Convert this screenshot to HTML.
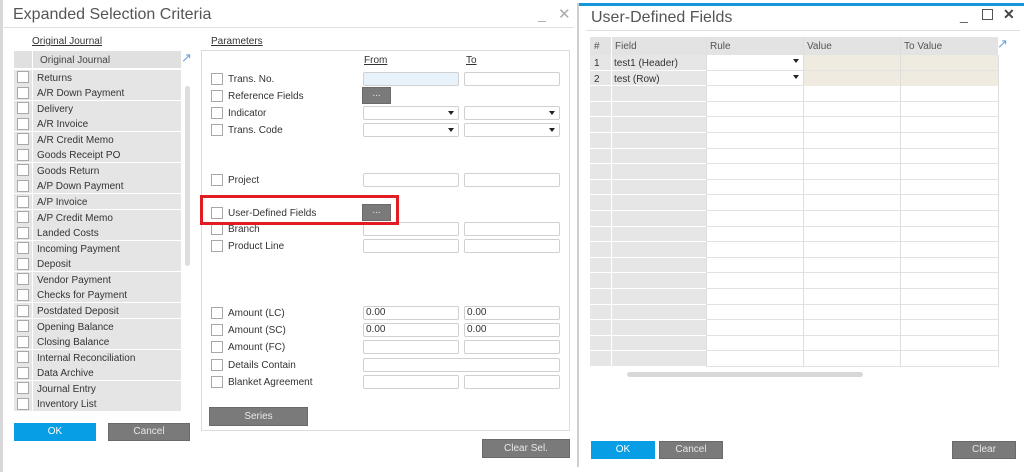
<!DOCTYPE html>
<html><head><meta charset="utf-8"><style>
*{margin:0;padding:0;box-sizing:border-box}
body{width:1024px;height:472px;background:#fff;position:relative;overflow:hidden;font-family:"Liberation Sans",sans-serif;font-size:10px;color:#333}
.a{position:absolute}
.cb{position:absolute;width:12px;height:12px;border:1px solid #a8a8a8;background:#fff}
.lbl{position:absolute;font-size:10px;color:#333;white-space:nowrap}
.in{position:absolute;height:14px;border:1px solid #d0d0d0;border-radius:2px;background:#fff;font-size:10px;padding-left:2px;line-height:12px}
.btn{position:absolute;background:#7a7a7a;color:#e8e8e8;font-size:10px;text-align:center;border:1px solid #6a6a6a}
.blue{background:#079ee6;color:#fff;border-color:#079ee6}
.u{text-decoration:underline}
.dd::after{content:"";position:absolute;right:4px;top:4px;border-left:3px solid transparent;border-right:3px solid transparent;border-top:4px solid #222}
.row{position:absolute;left:14px;width:167px;height:15px;background:#e5e5e5}
</style></head><body>
<div class="a" style="left:0;top:0;width:3px;height:472px;background:#d8d8d8"></div>
<div class="a" style="left:13px;top:6px;font-size:16px;color:#555">Expanded Selection Criteria</div>
<div class="a" style="left:538px;top:6px;font-size:14px;color:#aaa">_</div>
<div class="a" style="left:558px;top:5px;font-size:15px;color:#aaa">✕</div>
<div class="a" style="left:4px;top:27px;width:570px;height:1px;background:#e0e0e0"></div>
<div class="lbl u" style="left:32px;top:36px">Original Journal</div>
<div class="lbl u" style="left:211px;top:36px">Parameters</div>
<div class="a" style="left:14px;top:51px;width:167px;height:17px;background:#e0e0e0"></div>
<div class="a" style="left:32px;top:51px;width:1px;height:361px;background:#fff"></div>
<div class="lbl" style="left:40px;top:55px;color:#444">Original Journal</div>
<div class="a" style="left:181px;top:50px;font-size:13px;color:#6aa3d8">↗</div>
<div class="a" style="left:185px;top:86px;width:5px;height:180px;border-radius:3px;background:#ddd"></div>
<div id="list"></div>
<div class="a" style="left:201px;top:50px;width:369px;height:381px;border:1px solid #dcdcdc"></div>
<div class="lbl u" style="left:364px;top:55px">From</div>
<div class="lbl u" style="left:466px;top:55px">To</div>
<div id="params"></div>
<div class="a" style="left:200px;top:195px;width:199px;height:30px;border:3px solid #e31b23"></div>
<div class="btn" style="left:209px;top:407px;width:99px;height:19px;line-height:17px">Series</div>
<div class="btn blue" style="left:14px;top:423px;width:82px;height:18px;line-height:16px">OK</div>
<div class="btn" style="left:108px;top:423px;width:82px;height:18px;line-height:16px">Cancel</div>
<div class="btn" style="left:482px;top:439px;width:88px;height:19px;line-height:17px">Clear Sel.</div>
<div class="a" style="left:577px;top:3px;width:2px;height:464px;background:#cfcfcf"></div>
<div class="a" style="left:579px;top:3px;width:445px;height:3px;background:#1596dc"></div>
<div class="a" style="left:591px;top:9px;font-size:16px;color:#555">User-Defined Fields</div>
<div class="a" style="left:960px;top:7px;font-size:14px;color:#555">_</div>
<div class="a" style="left:982px;top:9px;width:11px;height:11px;border:1.5px solid #555"></div>
<div class="a" style="left:1003px;top:6px;font-size:14px;color:#444;font-weight:bold">✕</div>
<div class="a" style="left:586px;top:30px;width:434px;height:1px;background:#e0e0e0"></div>
<div class="a" style="left:997px;top:36px;font-size:13px;color:#6aa3d8">↗</div>
<div id="grid"></div>
<div class="a" style="left:627px;top:372px;width:236px;height:5px;border-radius:3px;background:#d8d8d8"></div>
<div class="btn blue" style="left:591px;top:441px;width:64px;height:18px;line-height:16px">OK</div>
<div class="btn" style="left:659px;top:441px;width:64px;height:18px;line-height:16px">Cancel</div>
<div class="btn" style="left:952px;top:441px;width:64px;height:18px;line-height:16px">Clear</div>
<script>
var L=["Returns","A/R Down Payment","Delivery","A/R Invoice","A/R Credit Memo","Goods Receipt PO","Goods Return","A/P Down Payment","A/P Invoice","A/P Credit Memo","Landed Costs","Incoming Payment","Deposit","Vendor Payment","Checks for Payment","Postdated Deposit","Opening Balance","Closing Balance","Internal Reconciliation","Data Archive","Journal Entry","Inventory List"];
var h="";L.forEach(function(t,i){var y=69.5+i*15.57;h+='<div class="row" style="top:'+y+'px"></div><div class="cb" style="left:17px;top:'+(y+1.5)+'px"></div><div class="lbl" style="left:37px;top:'+(y+3)+'px">'+t+'</div>';});
h+='<div class="a" style="left:32px;top:69px;width:1px;height:343px;background:#fff"></div>';
document.getElementById("list").innerHTML=h;
var P=[["Trans. No.",79,"tt"],["Reference Fields",96,"b"],["Indicator",113,"dd"],["Trans. Code",130,"dd"],["Project",180,"ii"],["User-Defined Fields",213,"b"],["Branch",229,"ii"],["Product Line",246,"ii"],["Amount (LC)",313,"z"],["Amount (SC)",330,"z"],["Amount (FC)",347,"ii"],["Details Contain",365,"w"],["Blanket Agreement",382,"ii"]];
h="";P.forEach(function(p){var y=p[1];h+='<div class="cb" style="left:211px;top:'+(y-6)+'px"></div><div class="lbl" style="left:228px;top:'+(y-5)+'px">'+p[0]+'</div>';
var t=y-7;
if(p[2]=="b")h+='<div class="btn" style="left:362px;top:'+(t-2)+'px;width:29px;height:17px;line-height:12px">...</div>';
else if(p[2]=="w")h+='<div class="in" style="left:363px;top:'+t+'px;width:197px"></div>';
else{var c=p[2]=="dd"?" dd":"";var v=p[2]=="z"?"0.00":"";var bg=p[2]=="tt"?"background:#e8f2fb;":"";
h+='<div class="in'+c+'" style="left:363px;top:'+t+'px;width:96px;'+bg+'">'+v+'</div><div class="in'+c+'" style="left:464px;top:'+t+'px;width:96px">'+v+'</div>';}});
document.getElementById("params").innerHTML=h;
var X=[590,611,706,803,900,998],H=["#","Field","Rule","Value","To Value"];
h='<div class="a" style="left:590px;top:37px;width:408px;height:18px;background:#e3e3e3"></div>';
for(var i=0;i<5;i++)h+='<div class="lbl" style="left:'+(X[i]+4)+'px;top:41px;color:#555">'+H[i]+'</div>';
for(var r=0;r<20;r++){var y=55+r*15.6;
h+='<div class="a" style="left:590px;top:'+y+'px;width:116px;height:15.6px;background:#e6e6e6;border-bottom:1px solid #fff"></div>';
h+='<div class="a" style="left:706px;top:'+y+'px;width:292px;height:15.6px;border-bottom:1px solid #e2e2e2;background:#fff"></div>';
if(r<2){h+='<div class="a" style="left:803px;top:'+y+'px;width:195px;height:15px;background:#efebe0"></div>';
h+='<div class="lbl" style="left:594px;top:'+(y+3)+'px">'+(r+1)+'</div><div class="lbl" style="left:614px;top:'+(y+3)+'px">'+(r?"test (Row)":"test1 (Header)")+'</div><div class="a dd" style="left:706px;top:'+y+'px;width:97px;height:15px"></div>';}}
for(var i=1;i<5;i++)h+='<div class="a" style="left:'+X[i]+'px;top:37px;width:1px;height:330px;background:'+(i<2?'#fff':'#dedede')+'"></div>';
h+='<div class="a" style="left:998px;top:55px;width:1px;height:312px;background:#dedede"></div>';
document.getElementById("grid").innerHTML=h;
</script>
</body></html>
